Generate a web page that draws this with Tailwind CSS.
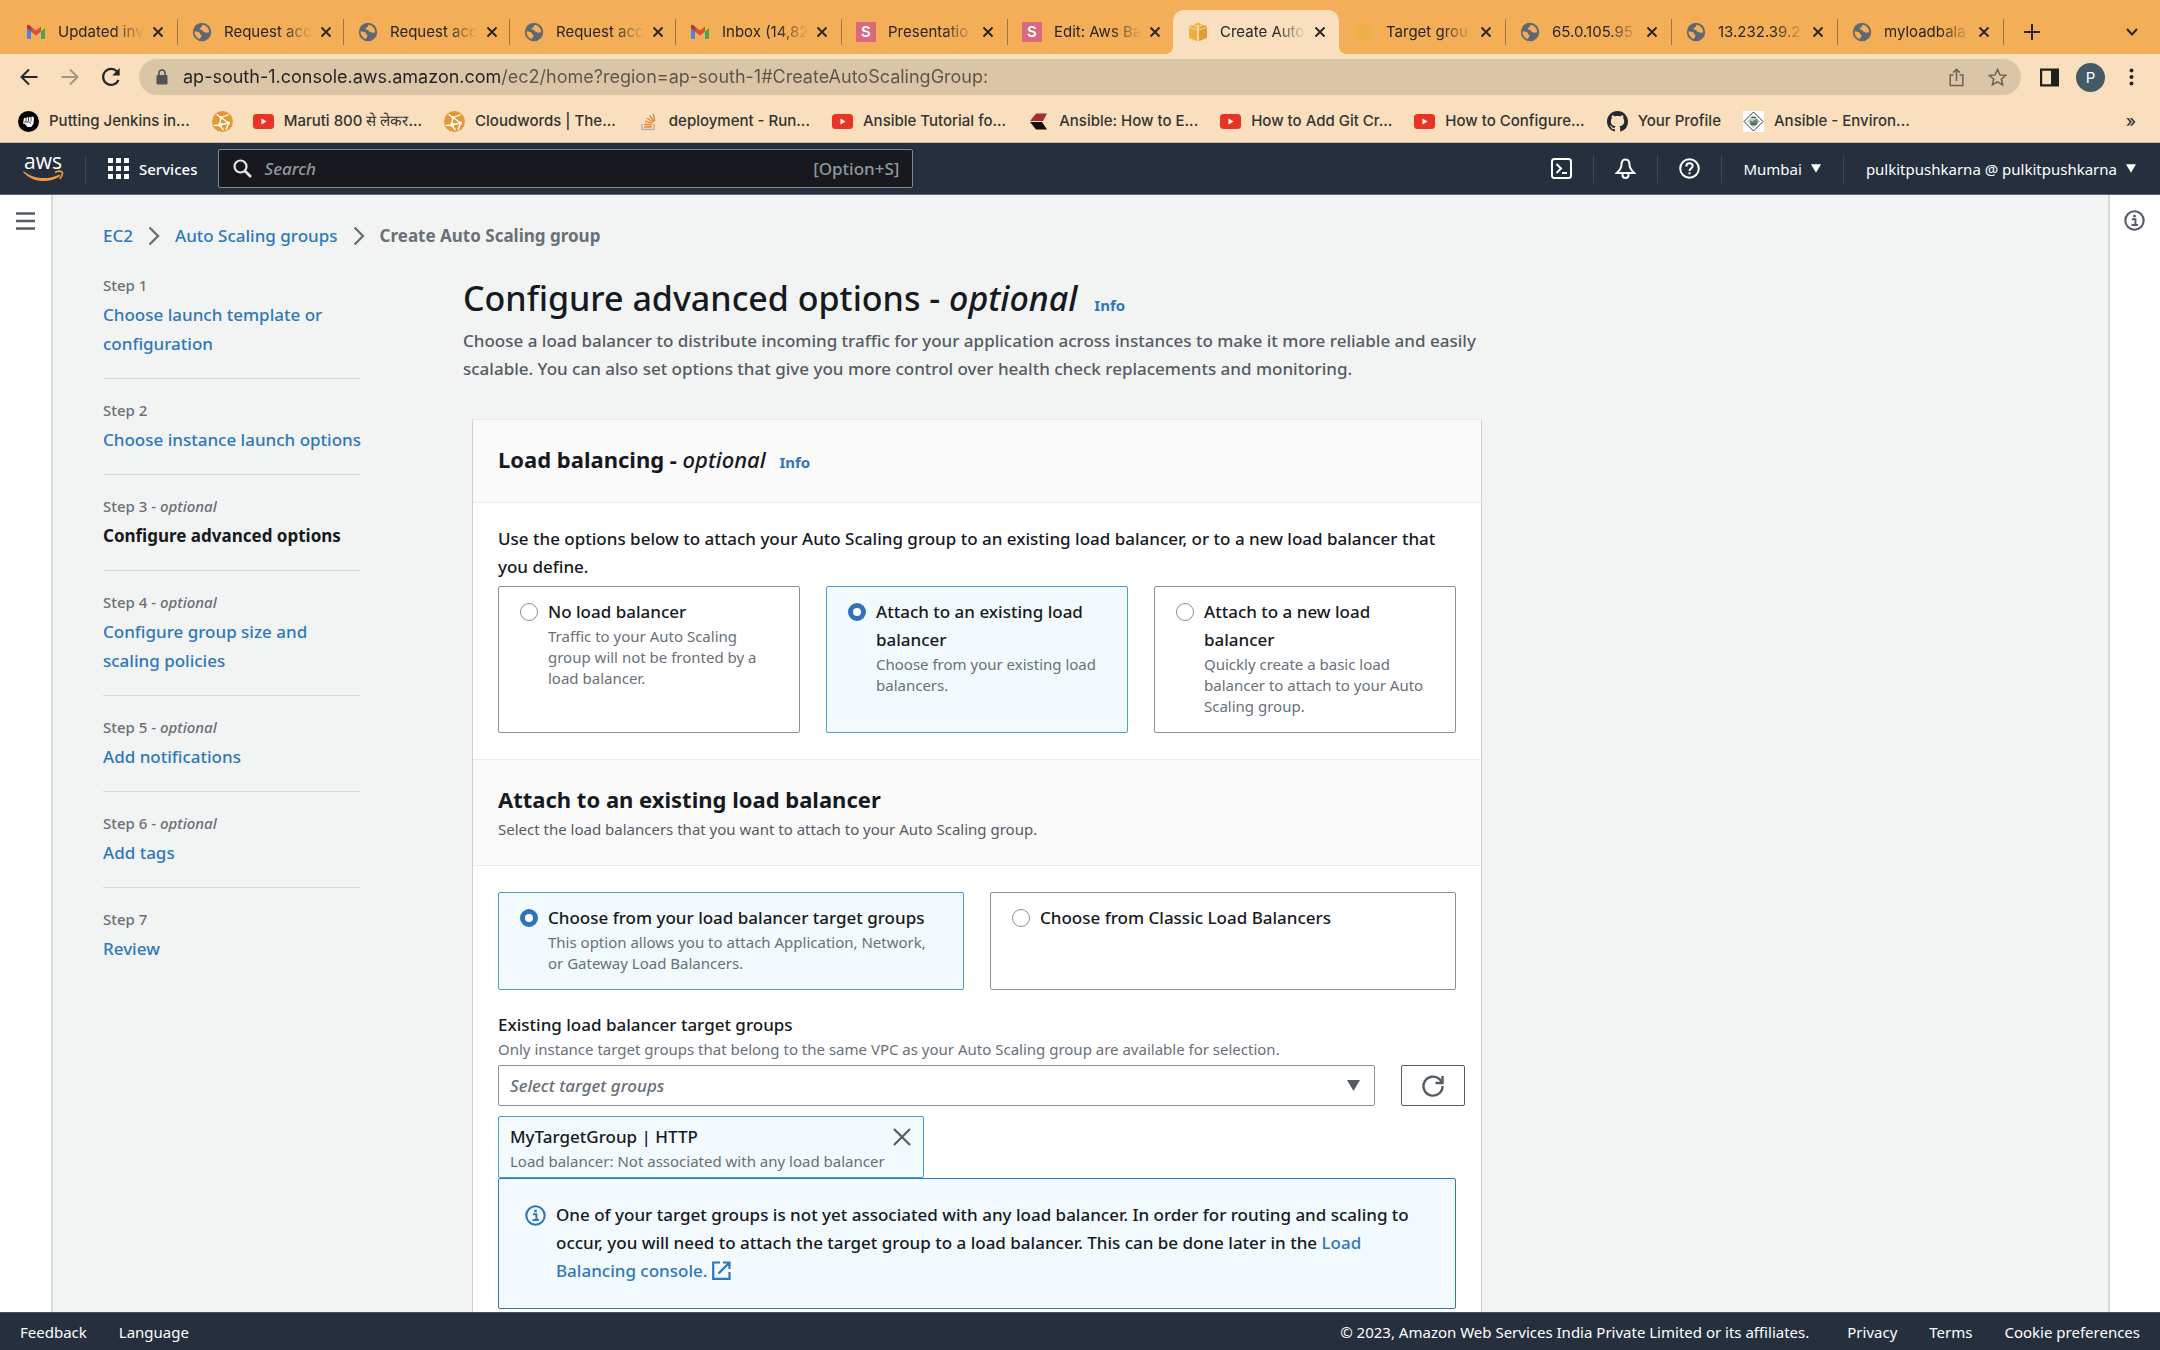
<!DOCTYPE html>
<html lang="en">
<head>
  <meta charset="UTF-8" />
  <meta name="viewport" content="width=device-width, initial-scale=1.0" />
  <title>Create Auto Scaling group | EC2</title>
  <!-- TailwindCSS via CDN -->
  <script src="https://cdn.jsdelivr.net/npm/@tailwindcss/browser@4"></script>
</head>
<body class="h-screen flex flex-col overflow-hidden bg-[#f2f4f3] font-['Noto_Sans',sans-serif] text-[17px] leading-[28px] font-medium text-[#16191f]">

  <!-- Shared icons -->
  <svg class="hidden">
    <symbol id="gmail" viewBox="0 0 20 20">
      <path d="M1 4v13h4V8z" fill="#4a86ee" />
      <path d="M19 4v13h-4V8z" fill="#46a756" />
      <path d="M15 4.500 17 3c1-.6 2 0 2 1.500V6l-4 3.500z" fill="#efb932" />
      <path d="M5 4.500 3 3C2 2.400 1 3 1 4.500V6l4 3.500z" fill="#b5342a" />
      <path d="M5 4.500 10 8.500l5-4v5l-5 4-5-4z" fill="#e04a3c" />
    </symbol>
    <symbol id="globe" viewBox="0 0 20 20">
      <circle cx="10" cy="10" r="9.200" fill="#5f6770" />
      <path d="M10.500 2.700c-1 1.400-.3 2.300-1.700 2.800-1.200.5-1.600 1.300-.6 2 1 .6 2.300.2 2.600 1.400.3 1 1.600.6 2.300 1.400.8 1 2.200.2 4 .3.300-3.900-2.500-7.500-6.600-7.900z" fill="#f4ae57" />
      <path d="M2.600 9.200c1.700.3 3.600.4 4.700 1.300 1.200 1 .5 1.700 1.600 2.300 1.200.7.6 2-.3 2.600-.5.500-.4 1.300-.8 1.700-3.400-1.200-5.500-4.300-5.200-7.900z" fill="#f4ae57" />
    </symbol>
    <symbol id="cube" viewBox="0 0 20 20">
      <path d="M10 .5 14.500 2.500 10 4.500 5.500 2.500z" fill="#f0b94a" />
      <path d="M1 4.500 4.800 3 9.400 5.200v14L1 16z" fill="#eab040" />
      <path d="M19 4.500 15.200 3l-4.600 2.200v14L19 16z" fill="#dfa035" />
      <path d="M10 5v14M1 5l8.500 3M19 5l-8.500 3" stroke="#f9dfbd" stroke-width=".8" />
    </symbol>
    <symbol id="cube-faded" viewBox="0 0 20 20">
      <path d="M10 1 19 4.500V16L10 19 1 16V4.500z" fill="#ecb247" />
    </symbol>
    <symbol id="x" viewBox="0 0 12 12"><path d="M1.500 1.500l9 9M10.500 1.500l-9 9" stroke="currentColor" stroke-width="1.900" /></symbol>
    <symbol id="youtube" viewBox="0 0 21 21">
      <rect y="3" width="21" height="15" rx="3.500" fill="#ea3323" />
      <path d="M8.500 7.500v6l5-3z" fill="#fff" />
    </symbol>
    <symbol id="cloudwords" viewBox="0 0 21 21">
      <circle cx="10.500" cy="10.500" r="10.500" fill="#e39a35" />
      <path d="M4.500 3.500 9 6.500 7.500 14 2 14.500M9 6.500l8-3M9 6.500l7.500 5.500-9 2 4 5M16.500 12 14 19" stroke="#fff" stroke-width="1.300" fill="none" />
      <circle cx="9" cy="6.500" r="1.600" fill="#fff" /><circle cx="16.500" cy="12" r="1.600" fill="#fff" /><circle cx="8" cy="14" r="2" fill="#fff" />
    </symbol>
    <symbol id="info" viewBox="0 0 16 16">
      <circle cx="8" cy="8" r="7" fill="none" stroke="currentColor" stroke-width="1.600" />
      <path d="M6 7h2.700v4.500M5.800 11.500h4.800" stroke="currentColor" stroke-width="1.500" fill="none" />
      <path d="M7 3.700h2v1.800H7z" fill="currentColor" />
    </symbol>
    <symbol id="chevron" viewBox="0 0 12 20"><path d="M1.500 1.500 10 10l-8.500 8.500" fill="none" stroke="currentColor" stroke-width="2.400" /></symbol>
    <symbol id="caret" viewBox="0 0 12 10"><path d="M0 0h12L6 10z" fill="currentColor" /></symbol>
  </svg>

  <!-- Browser tabs -->
  <div class="h-[54px] shrink-0 flex items-end bg-[#f4ae57] pl-[11px] pr-[15px] font-[Inter,sans-serif] text-[15px] leading-[44px] font-normal text-[#262626]">
    <div class="flex h-[44px] w-[166px] items-center pl-[15px] pr-[13px]">
      <svg class="size-5 shrink-0"><use href="#gmail" /></svg>
      <span class="ml-3 flex-1 whitespace-nowrap mask-r-from-65%">Updated inv</span>
      <button aria-label="Close tab" class="ml-2"><svg class="size-3"><use href="#x" /></svg></button>
    </div>
    <span class="h-[26px] w-px mb-[9px] -mr-px bg-[#9c7746]"></span>
    <div class="flex h-[44px] w-[166px] items-center pl-[15px] pr-[13px]">
      <svg class="size-5 shrink-0"><use href="#globe" /></svg>
      <span class="ml-3 flex-1 whitespace-nowrap mask-r-from-65%">Request acc</span>
      <button aria-label="Close tab" class="ml-2"><svg class="size-3"><use href="#x" /></svg></button>
    </div>
    <span class="h-[26px] w-px mb-[9px] -mr-px bg-[#9c7746]"></span>
    <div class="flex h-[44px] w-[166px] items-center pl-[15px] pr-[13px]">
      <svg class="size-5 shrink-0"><use href="#globe" /></svg>
      <span class="ml-3 flex-1 whitespace-nowrap mask-r-from-65%">Request acc</span>
      <button aria-label="Close tab" class="ml-2"><svg class="size-3"><use href="#x" /></svg></button>
    </div>
    <span class="h-[26px] w-px mb-[9px] -mr-px bg-[#9c7746]"></span>
    <div class="flex h-[44px] w-[166px] items-center pl-[15px] pr-[13px]">
      <svg class="size-5 shrink-0"><use href="#globe" /></svg>
      <span class="ml-3 flex-1 whitespace-nowrap mask-r-from-65%">Request acc</span>
      <button aria-label="Close tab" class="ml-2"><svg class="size-3"><use href="#x" /></svg></button>
    </div>
    <span class="h-[26px] w-px mb-[9px] -mr-px bg-[#9c7746]"></span>
    <div class="flex h-[44px] w-[166px] items-center pl-[15px] pr-[13px]">
      <svg class="size-5 shrink-0"><use href="#gmail" /></svg>
      <span class="ml-3 flex-1 whitespace-nowrap mask-r-from-65%">Inbox (14,82</span>
      <button aria-label="Close tab" class="ml-2"><svg class="size-3"><use href="#x" /></svg></button>
    </div>
    <span class="h-[26px] w-px mb-[9px] -mr-px bg-[#9c7746]"></span>
    <div class="flex h-[44px] w-[166px] items-center pl-[15px] pr-[13px]">
      <span class="size-5 shrink-0 bg-[#d9697e] text-center font-semibold leading-5 text-white">S</span>
      <span class="ml-3 flex-1 whitespace-nowrap mask-r-from-65%">Presentatio</span>
      <button aria-label="Close tab" class="ml-2"><svg class="size-3"><use href="#x" /></svg></button>
    </div>
    <span class="h-[26px] w-px mb-[9px] -mr-px bg-[#9c7746]"></span>
    <div class="flex h-[44px] w-[166px] items-center pl-[15px] pr-[13px]">
      <span class="size-5 shrink-0 bg-[#d9697e] text-center font-semibold leading-5 text-white">S</span>
      <span class="ml-3 flex-1 whitespace-nowrap mask-r-from-65%">Edit: Aws Ba</span>
      <button aria-label="Close tab" class="ml-2"><svg class="size-3"><use href="#x" /></svg></button>
    </div>
    <div class="relative flex h-[44px] w-[166px] items-center rounded-t-[11px] bg-[#f9dfbd] pl-[15px] pr-[13px] before:absolute before:-left-2 before:bottom-0 before:size-2 before:bg-[radial-gradient(circle_at_0_0,transparent_8px,#f9dfbd_8px)] after:absolute after:-right-2 after:bottom-0 after:size-2 after:bg-[radial-gradient(circle_at_100%_0,transparent_8px,#f9dfbd_8px)]">
      <svg class="size-5 shrink-0"><use href="#cube" /></svg>
      <span class="ml-3 flex-1 whitespace-nowrap mask-r-from-65%">Create Auto</span>
      <button aria-label="Close tab" class="ml-2"><svg class="size-3"><use href="#x" /></svg></button>
    </div>
    <div class="flex h-[44px] w-[166px] items-center pl-[15px] pr-[13px]">
      <svg class="size-5 shrink-0"><use href="#cube-faded" /></svg>
      <span class="ml-3 flex-1 whitespace-nowrap mask-r-from-65%">Target grou</span>
      <button aria-label="Close tab" class="ml-2"><svg class="size-3"><use href="#x" /></svg></button>
    </div>
    <span class="h-[26px] w-px mb-[9px] -mr-px bg-[#9c7746]"></span>
    <div class="flex h-[44px] w-[166px] items-center pl-[15px] pr-[13px]">
      <svg class="size-5 shrink-0"><use href="#globe" /></svg>
      <span class="ml-3 flex-1 whitespace-nowrap mask-r-from-65%">65.0.105.95</span>
      <button aria-label="Close tab" class="ml-2"><svg class="size-3"><use href="#x" /></svg></button>
    </div>
    <span class="h-[26px] w-px mb-[9px] -mr-px bg-[#9c7746]"></span>
    <div class="flex h-[44px] w-[166px] items-center pl-[15px] pr-[13px]">
      <svg class="size-5 shrink-0"><use href="#globe" /></svg>
      <span class="ml-3 flex-1 whitespace-nowrap mask-r-from-65%">13.232.39.2</span>
      <button aria-label="Close tab" class="ml-2"><svg class="size-3"><use href="#x" /></svg></button>
    </div>
    <span class="h-[26px] w-px mb-[9px] -mr-px bg-[#9c7746]"></span>
    <div class="flex h-[44px] w-[166px] items-center pl-[15px] pr-[13px]">
      <svg class="size-5 shrink-0"><use href="#globe" /></svg>
      <span class="ml-3 flex-1 whitespace-nowrap mask-r-from-65%">myloadbala</span>
      <button aria-label="Close tab" class="ml-2"><svg class="size-3"><use href="#x" /></svg></button>
    </div>
    <span class="h-[26px] w-px mb-[9px] -mr-px bg-[#9c7746]"></span>
    <div class="flex h-[44px] flex-1 items-center justify-between pl-[21px] pr-[7px]">
      <button aria-label="New tab"><svg class="size-4" viewBox="0 0 16 16"><path d="M8 0v16M0 8h16" stroke="#262626" stroke-width="2" /></svg></button>
      <button aria-label="Search tabs"><svg class="h-2 w-3" viewBox="0 0 12 8"><path d="M1 1l5 5.500L11 1" fill="none" stroke="#262626" stroke-width="2" /></svg></button>
    </div>
  </div>

  <!-- Address bar -->
  <div class="h-[46px] shrink-0 flex items-center bg-[#f9dfbd] pl-5 pr-[26px] font-[Inter,sans-serif] font-normal">
    <button aria-label="Back"><svg class="size-[18px]" viewBox="0 0 18 18"><path d="M17.500 9H1.500M9 1.500 1.500 9 9 16.500" fill="none" stroke="#262626" stroke-width="2" /></svg></button>
    <button aria-label="Forward" class="ml-[23px]"><svg class="size-[18px]" viewBox="0 0 18 18"><path d="M.5 9h16M9 1.500 16.500 9 9 16.500" fill="none" stroke="#a3957f" stroke-width="2" /></svg></button>
    <button aria-label="Reload" class="ml-[22px]"><svg class="size-5" viewBox="0 0 20 20"><path d="M17.500 13A8 8 0 1 1 16 4.500" fill="none" stroke="#262626" stroke-width="2.200" /><path d="M18.700 1v7.500h-7.500z" fill="#262626" /></svg></button>
    <div class="ml-[18px] flex h-[36px] flex-1 items-center rounded-full bg-[#dbc5a7] pl-[17px] pr-[14px]">
      <svg class="h-4 w-3 shrink-0" viewBox="0 0 12 16"><path d="M3 7V4a3 3 0 0 1 6 0v3" fill="none" stroke="#4f5357" stroke-width="1.600" /><rect x=".5" y="6" width="11" height="9.500" rx="1" fill="#4f5357" /></svg>
      <input aria-label="Address" value="ap-south-1.console.aws.amazon.com/ec2/home?region=ap-south-1#CreateAutoScalingGroup:" class="ml-[15px] flex-1 bg-[linear-gradient(to_right,#222_318px,#5d5448_318px)] bg-clip-text text-[18px] text-transparent outline-none" />
      <button aria-label="Share"><svg class="h-[19px] w-[15px]" viewBox="0 0 15 19"><path d="M4.500 7H1.200v10.500h12.600V7h-3.300M7.500 13V1.500M4.200 4.600l3.300-3.300 3.300 3.300" fill="none" stroke="#6a6257" stroke-width="1.500" /></svg></button>
      <button aria-label="Bookmark" class="ml-[24px]"><svg class="size-[19px]" viewBox="0 0 19 19"><path d="M9.500 1.500l2.400 5.400 5.900.5-4.500 3.900 1.400 5.700-5.200-3.100L4.300 17l1.400-5.700L1.200 7.400l5.900-.5z" fill="none" stroke="#6a6257" stroke-width="1.500" /></svg></button>
    </div>
    <button aria-label="Side panel" class="ml-[19px]"><svg class="size-[19px]" viewBox="0 0 19 19"><path d="M0 .5h19v18H0zM2.200 2.700v13.600H11V2.700z" fill="#1f1f1f" fill-rule="evenodd" /></svg></button>
    <button aria-label="Profile" class="ml-[17px] size-[29px] rounded-full bg-[#455a67] text-[15px] leading-[29px] text-white">P</button>
    <button aria-label="Menu" class="ml-[24px]"><svg class="h-[18px] w-[5px]" viewBox="0 0 5 18"><circle cx="2.500" cy="2.500" r="2" fill="#262626" /><circle cx="2.500" cy="9" r="2" fill="#262626" /><circle cx="2.500" cy="15.500" r="2" fill="#262626" /></svg></button>
  </div>

  <!-- Bookmarks -->
  <div class="h-[43px] shrink-0 flex items-center gap-[22px] border-b border-[#cdbb9f] bg-[#f9dfbd] pl-[18px] pr-[24px] font-[Inter,sans-serif] text-[15px] text-[#333] whitespace-nowrap">
    <a href="#" class="flex items-center gap-[10px]"><svg class="size-[21px]" viewBox="0 0 21 21"><circle cx="10.500" cy="10.500" r="10.500" fill="#000" /><path d="M6 7l9-1.500 1 1.500-.5 6-2.500 3H9.500l-2.500-3-2-.5z" fill="#fff" /><path d="M8 6.500v4M10.500 6v4.500M13 6v4.500M6 11h5l2 1.500" stroke="#000" stroke-width=".7" fill="none" /></svg>Putting Jenkins in...</a>
    <a href="#" aria-label="Cloudwords"><svg class="size-[21px]"><use href="#cloudwords" /></svg></a>
    <a href="#" class="-ml-[2px] flex items-center gap-[10px]"><svg class="size-[21px]"><use href="#youtube" /></svg>Maruti 800 से लेकर...</a>
    <a href="#" class="flex items-center gap-[10px]"><svg class="size-[21px]"><use href="#cloudwords" /></svg>Cloudwords | The...</a>
    <a href="#" class="flex items-center gap-[10px]"><svg class="size-[21px]" viewBox="0 0 21 21"><path d="M4 13v5.500h12V13" fill="none" stroke="#b9b1a5" stroke-width="1.500" /><path d="M6 16h8M6.200 13.200l7.800.9M7 10.200l7.400 2.200M8.800 7l6.400 4M11.500 4.500l4.600 6M15.300 3l1.500 7" stroke="#e8883a" stroke-width="1.400" /></svg>deployment - Run...</a>
    <a href="#" class="flex items-center gap-[10px]"><svg class="size-[21px]"><use href="#youtube" /></svg>Ansible Tutorial fo...</a>
    <a href="#" class="flex items-center gap-[10px]"><svg class="size-[21px]" viewBox="0 0 21 21"><path d="M8 2.500h11l-4 7.500H2z" fill="#a52f2c" /><path d="M2 11h12l5 7.500H8z" fill="#111" /></svg>Ansible: How to E...</a>
    <a href="#" class="flex items-center gap-[10px]"><svg class="size-[21px]"><use href="#youtube" /></svg>How to Add Git Cr...</a>
    <a href="#" class="flex items-center gap-[10px]"><svg class="size-[21px]"><use href="#youtube" /></svg>How to Configure...</a>
    <a href="#" class="flex items-center gap-[10px]"><svg class="size-[21px]" viewBox="0 0 16 16"><path fill="#24292f" d="M8 0C3.580 0 0 3.580 0 8c0 3.540 2.290 6.530 5.470 7.590.4.070.55-.17.55-.38 0-.19-.01-.82-.01-1.490-2.010.37-2.530-.49-2.690-.94-.09-.23-.48-.94-.82-1.130-.28-.15-.68-.52-.01-.53.63-.01 1.080.58 1.230.82.72 1.210 1.870.87 2.330.66.07-.52.28-.87.51-1.070-1.780-.2-3.640-.89-3.640-3.950 0-.87.31-1.590.82-2.150-.08-.2-.36-1.020.08-2.120 0 0 .67-.21 2.200.82.64-.18 1.320-.27 2-.27s1.360.09 2 .27c1.530-1.040 2.200-.82 2.200-.82.44 1.100.16 1.920.08 2.120.51.56.82 1.270.82 2.150 0 3.070-1.870 3.750-3.650 3.950.29.25.54.73.54 1.480 0 1.070-.01 1.930-.01 2.200 0 .21.15.46.55.38A8.010 8.010 0 0 0 16 8c0-4.420-3.580-8-8-8z" /></svg>Your Profile</a>
    <a href="#" class="flex items-center gap-[10px]"><svg class="size-[21px]" viewBox="0 0 21 21"><path d="M0 0h21v21H0z" fill="#fff" /><path d="M10.500 1 20 10.500 10.500 20 1 10.500z" fill="#fff" stroke="#333" /><path d="M10.500 4 17 10.500 10.500 17 4 10.500z" fill="#c3cdc6" /><path d="M6.500 9l3 1.500L14 7.500l1 3.500-2.500 3.500h-4z" fill="#5f8a6c" /><path d="M8 6.500h5M7 13h7" stroke="#3d4c44" /></svg>Ansible - Environ...</a>
    <button aria-label="More bookmarks" class="ml-auto text-[17px]">»</button>
  </div>

  <!-- AWS navigation -->
  <header class="h-[52px] shrink-0 flex items-center border-b border-[#5f6873] bg-[#262f3e] pl-[23px] pr-6 text-[15px] font-normal text-white">
    <a href="#" aria-label="AWS" class="flex w-[40px] flex-col items-center">
      <span class="h-[15px] text-[21px] leading-[12px] font-['Open_Sans',sans-serif]">aws</span>
      <svg class="h-[13px] w-[41px]" viewBox="0 0 41 13"><path d="M.5 1.200C11 9 25 10.300 36.500 4.400l.8 1.500C27 13.500 10 13 .2 2.200z" fill="#ef9c38" /><path d="M32 2.400c3-1.400 6-1.500 7-.4.800 1.200-.2 4.500-2.200 7" fill="none" stroke="#ef9c38" stroke-width="1.700" /></svg>
    </a>
    <span class="ml-[22px] h-[28px] w-px bg-[#3d4653]"></span>
    <button class="ml-[22px] flex items-center gap-[10px] font-medium">
      <svg class="size-[21px]" viewBox="0 0 21 21" fill="#fff"><path d="M0 0h5v5H0zM8 0h5v5H8zM16 0h5v5h-5zM0 8h5v5H0zM8 8h5v5H8zM16 8h5v5h-5zM0 16h5v5H0zM8 16h5v5H8zM16 16h5v5h-5z" /></svg>
      Services
    </button>
    <label class="ml-[21px] flex h-[39px] w-[695px] items-center rounded-[2px] border border-[#7d898c] bg-[#17191e] pl-[14px] pr-[13px] text-[17px] font-medium text-[#8d999b]">
      <svg class="size-[19px]" viewBox="0 0 19 19"><circle cx="7.500" cy="7.500" r="6" fill="none" stroke="#e4e8e8" stroke-width="2.200" /><path d="M12 12l6 6" stroke="#e4e8e8" stroke-width="2.600" /></svg>
      <input aria-label="Search" placeholder="Search" class="ml-3 flex-1 bg-transparent outline-none placeholder:italic placeholder:text-[#8d999b]" />
      [Option+S]
    </label>
    <div class="ml-auto flex items-center">
      <button aria-label="CloudShell"><svg class="size-[21px]" viewBox="0 0 21 21" fill="none" stroke="#fff" stroke-width="2"><rect x="1" y="1" width="19" height="19" rx="2.500" /><path d="M5.500 6 10 10.500 5.500 15M11 15h5" /></svg></button>
      <span class="ml-[21px] h-[28px] w-px bg-[#3d4653]"></span>
      <button aria-label="Notifications" class="ml-[21px]"><svg class="size-[21px]" viewBox="0 0 21 21" fill="none" stroke="#fff" stroke-width="2"><path d="M10.500 1.500c-2.800 0-4 2-4 5 0 4-2 6-4.700 8.500h17.400c-2.700-2.500-4.700-4.500-4.700-8.500 0-3-1.200-5-4-5zM7.500 15.500V17a3 3 0 0 0 6 0v-1.500" /></svg></button>
      <span class="ml-[21px] h-[28px] w-px bg-[#3d4653]"></span>
      <button aria-label="Help" class="ml-[21px]"><svg class="size-[21px]" viewBox="0 0 21 21" fill="none" stroke="#fff" stroke-width="2"><circle cx="10.500" cy="10.500" r="9.300" /><path d="M7.300 8.500c0-2 1.400-3.200 3.200-3.200s3.200 1.200 3.200 2.800c0 2.200-3.200 2.400-3.200 5M10.500 14.300v2" /></svg></button>
      <span class="ml-[21px] h-[28px] w-px bg-[#3d4653]"></span>
      <button class="ml-[21px] flex items-center gap-[9px]">Mumbai <svg class="h-[9px] w-[10px]"><use href="#caret" /></svg></button>
      <span class="ml-[22px] h-[28px] w-px bg-[#3d4653]"></span>
      <button class="ml-[22px] flex items-center gap-[9px]">pulkitpushkarna @ pulkitpushkarna <svg class="h-[9px] w-[10px]"><use href="#caret" /></svg></button>
    </div>
  </header>

  <div class="flex min-h-0 flex-1">
    <aside class="w-[53px] shrink-0 border-r-2 border-[#d7dadb] bg-white pt-[17px] pl-4">
      <button aria-label="Open navigation" class="block"><svg class="h-[18px] w-[19px]" viewBox="0 0 19 18"><path d="M0 1.500h19M0 9h19M0 16.500h19" stroke="#545b64" stroke-width="2.400" /></svg></button>
    </aside>

    <div class="flex-1 overflow-hidden pt-[27px] pl-[50px]">
      <nav aria-label="Breadcrumb" class="flex items-center gap-[15px] text-[#687078]">
        <a href="#" class="text-[#2f77bb]">EC2</a>
        <svg class="h-5 w-3"><use href="#chevron" /></svg>
        <a href="#" class="text-[#2f77bb]">Auto Scaling groups</a>
        <svg class="h-5 w-3"><use href="#chevron" /></svg>
        <span class="font-bold">Create Auto Scaling group</span>
      </nav>

      <div class="flex items-start">
        <ol class="mt-[5px] w-[257px] shrink-0 leading-[29px]">
          <li class="border-b border-[#d5dbdb] pt-5 pb-5">
            <p class="mb-[5px] text-[15px] leading-5 text-[#687078]">Step 1</p>
            <a href="#" class="block text-[#2f77bb]">Choose launch template or configuration</a>
          </li>
          <li class="border-b border-[#d5dbdb] pt-[21px] pb-5">
            <p class="mb-[5px] text-[15px] leading-5 text-[#687078]">Step 2</p>
            <a href="#" class="block whitespace-nowrap text-[#2f77bb]">Choose instance launch options</a>
          </li>
          <li class="border-b border-[#d5dbdb] pt-[21px] pb-5">
            <p class="mb-[5px] text-[15px] leading-5 text-[#687078]">Step 3 - <i>optional</i></p>
            <span class="block font-bold">Configure advanced options</span>
          </li>
          <li class="border-b border-[#d5dbdb] pt-[21px] pb-5">
            <p class="mb-[5px] text-[15px] leading-5 text-[#687078]">Step 4 - <i>optional</i></p>
            <a href="#" class="block text-[#2f77bb]">Configure group size and scaling policies</a>
          </li>
          <li class="border-b border-[#d5dbdb] pt-[21px] pb-5">
            <p class="mb-[5px] text-[15px] leading-5 text-[#687078]">Step 5 - <i>optional</i></p>
            <a href="#" class="block text-[#2f77bb]">Add notifications</a>
          </li>
          <li class="border-b border-[#d5dbdb] pt-[21px] pb-5">
            <p class="mb-[5px] text-[15px] leading-5 text-[#687078]">Step 6 - <i>optional</i></p>
            <a href="#" class="block text-[#2f77bb]">Add tags</a>
          </li>
          <li class="pt-[21px]">
            <p class="mb-[5px] text-[15px] leading-5 text-[#687078]">Step 7</p>
            <a href="#" class="block text-[#2f77bb]">Review</a>
          </li>
        </ol>

        <main class="ml-[103px] max-w-[1019px] flex-1 pt-[24px]">
          <h1 class="text-[34px] leading-[48px]">Configure advanced options - <i>optional</i> <a href="#" class="ml-2 text-[15px] leading-none font-bold text-[#2f77bb]">Info</a></h1>
          <p class="mt-[5px] text-[#545b64]">Choose a load balancer to distribute incoming traffic for your application across instances to make it more reliable and easily scalable. You can also set options that give you more control over health check replacements and monitoring.</p>

          <section class="mt-[36px] ml-[9px] border border-t-[#eaeded] border-x-[#ccd1d1] bg-white">
            <div class="border-b border-[#eaeded] bg-[#fafafa] px-[25px] pt-[23px] pb-[27px]">
              <h2 class="text-[22px] leading-[32px] font-bold">Load balancing - <i class="font-medium">optional</i> <a href="#" class="ml-2 text-[15px] leading-none text-[#2f77bb]">Info</a></h2>
            </div>
            <div class="px-[25px] pt-[22px] pb-[26px]">
              <p id="lb-label">Use the options below to attach your Auto Scaling group to an existing load balancer, or to a new load balancer that you define.</p>
              <div role="radiogroup" aria-labelledby="lb-label" class="mt-[5px] grid grid-cols-3 gap-[26px]">
                <label class="flex min-h-[147px] gap-[10px] rounded-[2px] border border-[#879293] px-[21px] pt-[11px] pb-[15px]">
                  <input type="radio" name="lb" class="mt-[5px] size-[18px] shrink-0 appearance-none rounded-full border border-[#879293] bg-white" />
                  <span>No load balancer<span class="block text-[15px] leading-[21px] font-normal text-[#687078]">Traffic to your Auto Scaling group will not be fronted by a load balancer.</span></span>
                </label>
                <label class="flex min-h-[147px] gap-[10px] rounded-[2px] border border-[#42a2cb] bg-[#f2fafd] px-[21px] pt-[11px] pb-[15px]">
                  <input type="radio" name="lb" checked class="mt-[5px] size-[18px] shrink-0 appearance-none rounded-full border-[5px] border-[#2f74b8] bg-white" />
                  <span>Attach to an existing load balancer<span class="block text-[15px] leading-[21px] font-normal text-[#687078]">Choose from your existing load balancers.</span></span>
                </label>
                <label class="flex min-h-[147px] gap-[10px] rounded-[2px] border border-[#879293] px-[21px] pt-[11px] pb-[15px]">
                  <input type="radio" name="lb" class="mt-[5px] size-[18px] shrink-0 appearance-none rounded-full border border-[#879293] bg-white" />
                  <span>Attach to a new load balancer<span class="block text-[15px] leading-[21px] font-normal text-[#687078]">Quickly create a basic load balancer to attach to your Auto Scaling group.</span></span>
                </label>
              </div>
            </div>

            <div class="border-y border-[#eaeded] bg-[#fafafa] px-[25px] pt-[23px] pb-[25px]">
              <h2 class="text-[22px] leading-[32px] font-bold">Attach to an existing load balancer</h2>
              <p class="mt-[3px] text-[15px] leading-[22px] font-normal text-[#545b64]">Select the load balancers that you want to attach to your Auto Scaling group.</p>
            </div>
            <div class="px-[25px] pt-[26px]">
              <div role="radiogroup" aria-label="Load balancer type" class="grid grid-cols-2 gap-[26px]">
                <label class="flex min-h-[98px] gap-[10px] rounded-[2px] border border-[#42a2cb] bg-[#f2fafd] px-[21px] pt-[11px] pb-[15px]">
                  <input type="radio" name="lbtype" checked class="mt-[5px] size-[18px] shrink-0 appearance-none rounded-full border-[5px] border-[#2f74b8] bg-white" />
                  <span>Choose from your load balancer target groups<span class="block text-[15px] leading-[21px] font-normal text-[#687078]">This option allows you to attach Application, Network, or Gateway Load Balancers.</span></span>
                </label>
                <label class="flex min-h-[98px] gap-[10px] rounded-[2px] border border-[#879293] px-[21px] pt-[11px] pb-[15px]">
                  <input type="radio" name="lbtype" class="mt-[5px] size-[18px] shrink-0 appearance-none rounded-full border border-[#879293] bg-white" />
                  <span>Choose from Classic Load Balancers</span>
                </label>
              </div>

              <label for="targets" class="mt-[21px] block">Existing load balancer target groups</label>
              <p class="text-[15px] leading-[21px] font-normal text-[#687078]">Only instance target groups that belong to the same VPC as your Auto Scaling group are available for selection.</p>
              <div class="mt-[5px] -mr-[9px] flex gap-[26px]">
                <div class="relative flex-1">
                  <select id="targets" class="block h-[41px] w-full appearance-none rounded-[2px] border border-[#879293] bg-white px-[11px] text-[17px] text-[#687078] italic">
                    <option>Select target groups</option>
                  </select>
                  <svg class="pointer-events-none absolute top-[15px] right-[15px] h-[11px] w-[13px] text-[#545b64]"><use href="#caret" /></svg>
                </div>
                <button aria-label="Refresh" class="flex h-[41px] w-[64px] items-center justify-center rounded-[2px] border border-[#545b64]">
                  <svg class="size-[22px]" viewBox="0 0 22 22" fill="none" stroke="#545b64" stroke-width="2.400"><path d="M20.500 11a9.500 9.500 0 1 1-3-6.800L20 7" /><path d="M20.500 1v7H13.500" /></svg>
                </button>
              </div>

              <div class="mt-[10px] flex h-[62px] w-[426px] justify-between rounded-[2px] border border-[#42a2cb] bg-[#f2fafd] pt-[6px] pl-[11px] pr-[12px]">
                <p>MyTargetGroup | HTTP<span class="block text-[15px] leading-[21px] font-normal text-[#687078]">Load balancer: Not associated with any load balancer</span></p>
                <button aria-label="Remove MyTargetGroup" class="mt-[5px] self-start text-[#545b64]"><svg class="size-[18px]" viewBox="0 0 18 18"><path d="M1 1l16 16M17 1 1 17" stroke="currentColor" stroke-width="2.200" /></svg></button>
              </div>

              <div class="flex gap-[10px] rounded-[2px] border border-[#2f77bb] bg-[#f2fafd] px-[26px] pt-[22px] pb-[23px]">
                <svg class="mt-1 size-[21px] shrink-0 text-[#2f77bb]"><use href="#info" /></svg>
                <p>One of your target groups is not yet associated with any load balancer. In order for routing and scaling to occur, you will need to attach the target group to a load balancer. This can be done later in the <a href="#" class="text-[#2f77bb]">Load Balancing console. <svg class="inline size-[19px] align-[-3px]" viewBox="0 0 19 19" fill="none" stroke="currentColor" stroke-width="2.200"><path d="M8 1.500H1.200v16.300h16.300V11M11 1.500h6.500V8M17.500 1.500 6.500 12.500" /></svg></a></p>
              </div>
              <div class="h-[200px]"></div>
            </div>
          </section>
        </main>
      </div>
    </div>

    <aside class="w-[52px] shrink-0 border-l-2 border-[#d7dadb] bg-white pt-[15px] pl-[14px]">
      <button aria-label="Open help panel" class="block text-[#545b64]"><svg class="size-[21px]"><use href="#info" /></svg></button>
    </aside>
  </div>

  <footer class="h-[38px] shrink-0 flex items-center bg-[#262f3e] border-t border-[#4a525e] px-5 text-[15px] font-normal text-white whitespace-nowrap">
    <a href="#">Feedback</a>
    <button class="ml-[32px]">Language</button>
    <span class="ml-auto">© 2023, Amazon Web Services India Private Limited or its affiliates.</span>
    <a href="#" class="ml-[38px]">Privacy</a>
    <a href="#" class="ml-[32px]">Terms</a>
    <a href="#" class="ml-[32px]">Cookie preferences</a>
  </footer>
</body>
</html>
